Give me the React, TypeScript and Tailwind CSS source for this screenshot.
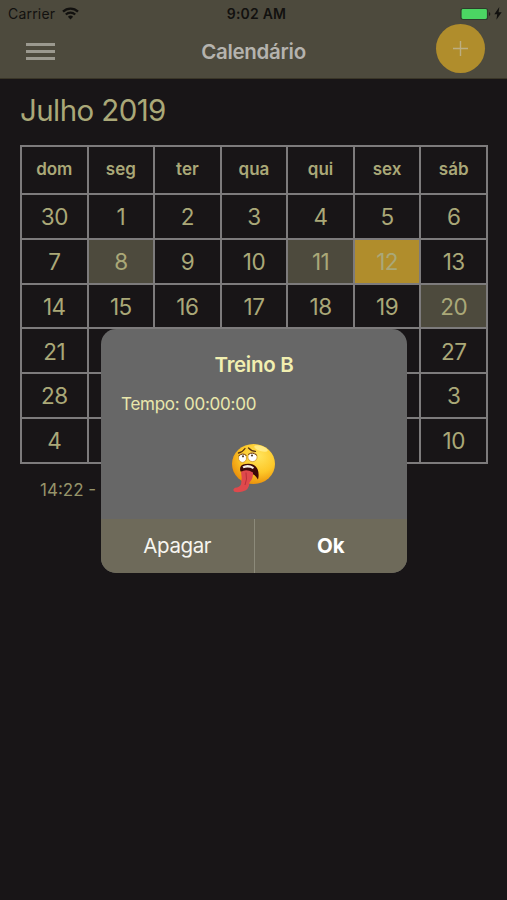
import clsx from "clsx";
import type { ReactNode } from "react";

const WEEKDAYS = ["dom", "seg", "ter", "qua", "qui", "sex", "sáb"];

const WEEKS = [
  [30, 1, 2, 3, 4, 5, 6],
  [7, 8, 9, 10, 11, 12, 13],
  [14, 15, 16, 17, 18, 19, 20],
  [21, 22, 23, 24, 25, 26, 27],
  [28, 29, 30, 31, 1, 2, 3],
  [4, 5, 6, 7, 8, 9, 10],
];

// indexes into the flattened month
const TRAINED = [8, 11, 20];
const TODAY = 12;

function StatusBar() {
  return (
    <div className="flex h-[27px] items-center justify-between pl-2 pr-[5px] text-[14px] text-[#12110f]">
      <div className="flex flex-1 items-center gap-[7px]">
        <span className="tracking-[0.2px]">Carrier</span>
        <svg width="17" height="13" viewBox="0 0 17 13" fill="none">
          <path d="M1 4.6a10.8 10.8 0 0 1 15 0" stroke="currentColor" strokeWidth="2.3" />
          <path d="M3.8 7.5a6.8 6.8 0 0 1 9.4 0" stroke="currentColor" strokeWidth="2.2" />
          <path d="M8.5 12.4 5.9 9.8a3.8 3.8 0 0 1 5.2 0Z" fill="currentColor" />
        </svg>
      </div>
      <span className="pl-[3px] font-semibold tracking-[0.2px]">9:02 AM</span>
      <div className="flex flex-1 items-center justify-end gap-[3px]">
        <svg width="32" height="14" viewBox="0 0 32 14">
          <rect x="2" y="1.5" width="26.500" height="11" rx="2" fill="#4bd663" stroke="#2f3c2b" strokeWidth="1.2" />
          <path d="M30 5v4q1.3-.6 1.3-2T30 5Z" fill="#24231d" />
        </svg>
        <svg width="8" height="13" viewBox="0 0 8 13" fill="currentColor">
          <path d="M5.3 0 .3 7.300h2.900L2.400 12.800 7.700 5.300H4.600Z" />
        </svg>
      </div>
    </div>
  );
}

function Header() {
  return (
    <header className="h-[79px] border-b border-[#3a3628] bg-[#4d4a3d]">
      <StatusBar />
      <div className="grid grid-cols-3 items-start px-[22px]">
        <button className="ml-1 mt-4 flex w-[29px] flex-col gap-1 justify-self-start">
          <span className="h-[3px] bg-[#9b998f]" />
          <span className="h-[3px] bg-[#9b998f]" />
          <span className="h-[3px] bg-[#9b998f]" />
        </button>
        <h1 className="mt-[9px] text-center text-[20.5px] font-semibold leading-8 tracking-[-0.3px] text-[#b5b3ae]">
          Calendário
        </h1>
        <button className="-mt-[3px] flex size-[49px] items-center justify-center justify-self-end rounded-full bg-[#b08d2c]">
          <svg width="15" height="15" viewBox="0 0 15 15" stroke="#bcae82" strokeWidth="1.4">
            <path d="M7.5 0v15M0 7.5h15" />
          </svg>
        </button>
      </div>
    </header>
  );
}

function Cell({ className, children }: { className?: string; children: ReactNode }) {
  return (
    <div className={clsx("flex items-center justify-center", className ?? "bg-[#181517]")}>
      {children}
    </div>
  );
}

function MonthGrid() {
  return (
    <div className="grid h-[319px] grid-cols-7 grid-rows-[46px_repeat(6,minmax(0,1fr))] gap-[2px] bg-[#7d7b7c] p-[2px] text-[#aaa878]">
      {WEEKDAYS.map((name) => (
        <Cell key={name}>
          <span className="text-[17px] font-semibold">{name}</span>
        </Cell>
      ))}
      {WEEKS.flat().map((day, i) => (
        <Cell
          key={i}
          className={clsx(
            TRAINED.includes(i) ? "bg-[#4d4a3d]" : i === TODAY ? "bg-[#b08d2c]" : "bg-[#181517]"
          )}
        >
          <span className="pt-px text-[22.5px] tracking-[-0.5px]">{day}</span>
        </Cell>
      ))}
    </div>
  );
}

function TiredFace() {
  return (
    <svg width="46" height="50" viewBox="0 0 46 50">
      <defs>
        <radialGradient id="face" cx="0.62" cy="0.3" r="0.75">
          <stop offset="0" stopColor="#ffe45c" />
          <stop offset="0.55" stopColor="#fdc829" />
          <stop offset="1" stopColor="#e98b08" />
        </radialGradient>
      </defs>
      <ellipse cx="23.5" cy="21" rx="21.5" ry="20" fill="url(#face)" />
      <ellipse cx="31" cy="5.500" rx="7" ry="2.600" fill="#fff2a0" opacity="0.7" transform="rotate(18 31 5.5)" />
      {/* brows */}
      <g stroke="#5a3410" strokeWidth="1.3" fill="none" strokeLinecap="round">
        <path d="M8.500 10q4-.8 6.500-4.500" />
        <path d="M18.500 5q3 3.300 7 3.400" />
      </g>
      <ellipse cx="12.500" cy="15" rx="4" ry="4.400" fill="#fff" stroke="#c98a1c" strokeWidth="0.700" />
      <ellipse cx="22.500" cy="14" rx="4.600" ry="4.600" fill="#fff" stroke="#c98a1c" strokeWidth="0.700" />
      <path d="M8.500 13q4-3.500 8-.5M18 11.500q5-3 9 1" stroke="#7a4a12" strokeWidth="1" fill="none" />
      <circle cx="13" cy="13.300" r="1.100" fill="#54402a" />
      <circle cx="22" cy="12.500" r="1.100" fill="#54402a" />
      {/* mouth and tongue */}
      <path d="M10.500 28.500q-2-6.500 5-7.500 9-1.500 12 5 2 5 .5 10.500-2.500-4.500-5.500-5.500-6-2.500-12-2.500Z" fill="#3c0808" />
      <path d="M12.500 23.500q5.500-3.600 11.500.8l-1 1.700q-4.500-2.500-9.500-.8Z" fill="#f5ede2" />
      <path d="M11 29q5-3.500 12 .5.500 6-3.500 10-.5 8-7 9-5 1.200-8 .2-2.500-2.200.5-4 4.500-.2 6-3.200 1.500-6 0-12.500Z" fill="#df494c" />
      <path d="M16 29.500q1.500 7-1 12.500" stroke="#b92f38" strokeWidth="1" fill="none" />
    </svg>
  );
}

function WorkoutDialog() {
  return (
    <div className="absolute left-[101px] top-[329px] flex h-[244px] w-[306px] flex-col overflow-hidden rounded-[15px] bg-[#676767]">
      <div className="flex flex-1 flex-col px-5">
        <h2 className="mt-[21px] text-center text-[20.5px] font-semibold leading-[30px] tracking-[-0.3px] text-[#f1efb0]">
          Treino B
        </h2>
        <p className="mt-3 text-[17px] leading-6 tracking-[-0.25px] text-[#e9e7ac]">
          Tempo: 00:00:00
        </p>
        <div className="mt-[27px] flex justify-center pr-[2px]">
          <TiredFace />
        </div>
      </div>
      <div className="flex h-[54px] bg-[#6e6a5a] text-[20.5px] text-white">
        <button className="flex-1 border-r border-[#8c8a7a] tracking-[-0.4px] text-[#f6f5ef]">
          Apagar
        </button>
        <button className="flex-1 font-bold">Ok</button>
      </div>
    </div>
  );
}

export default function App() {
  return (
    <div className="relative h-[900px] w-[507px] overflow-hidden bg-[#181517] font-['Inter',sans-serif]">
      <Header />
      <main className="pl-5 pr-[19px]">
        <h2 className="mt-[11px] text-[29.5px] leading-10 tracking-[-0.6px] text-[#aaa878]">
          Julho 2019
        </h2>
        <div className="mt-[15px]">
          <MonthGrid />
        </div>
        <p className="ml-5 mt-[14px] text-[17px] leading-6 text-[#96946a]">14:22 -</p>
      </main>
      <WorkoutDialog />
    </div>
  );
}
